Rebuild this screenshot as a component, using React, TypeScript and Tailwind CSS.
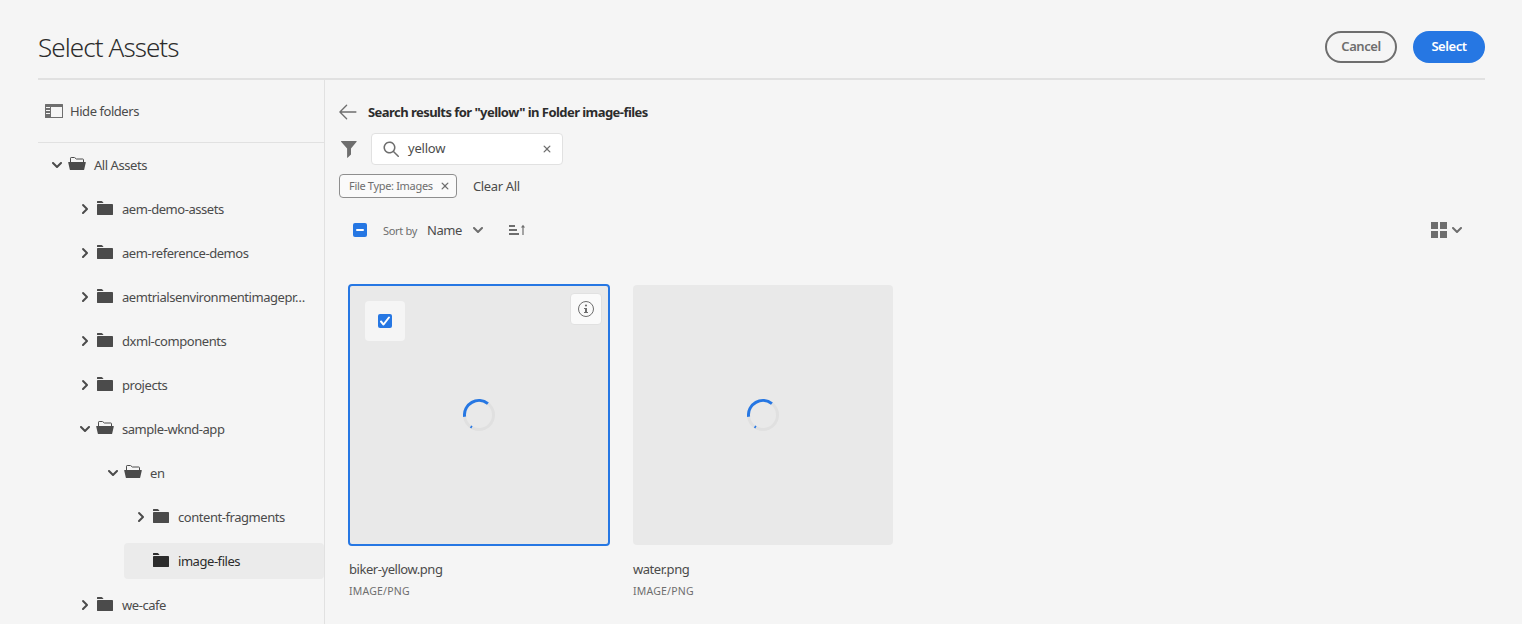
import React from 'react';

type IconProps = { className?: string };

const Chevron = ({ className = '' }: IconProps) => (
  <svg viewBox="0 0 10 6" className={`h-1.5 w-2.5 shrink-0 ${className}`} fill="currentColor">
    <path d="M9.99 1.01A1 1 0 0 0 8.283.303L5 3.586 1.717.303A1 1 0 1 0 .303 1.717l3.99 3.98a1 1 0 0 0 1.414 0l3.99-3.98a.997.997 0 0 0 .293-.707z" />
  </svg>
);

const Cross = () => (
  <svg viewBox="0 0 8 8" className="size-2 shrink-0 text-[#6e6e6e]" fill="currentColor">
    <path d="M7.317 6.433L4.884 4l2.433-2.433a.625.625 0 1 0-.884-.884L4 3.116 1.567.683a.625.625 0 1 0-.884.884L3.116 4 .683 6.433a.625.625 0 1 0 .884.884L4 4.884l2.433 2.433a.625.625 0 0 0 .884-.884z" />
  </svg>
);

const Folder = ({ open }: { open?: boolean }) => (
  <svg viewBox="0 0 18 18" className="size-[18px] shrink-0" fill="currentColor">
    {open ? (
      <>
        <path d="M2.5 6.5V2.2a.7.7 0 0 1 .7-.7h3.1a.8.8 0 0 1 .6.3l1.5 1.2h6.4a.7.7 0 0 1 .7.7v2.8" fill="none" stroke="currentColor" />
        <path d="M.6 6h16.8a.4.4 0 0 1 .4.5l-1.6 7a.6.6 0 0 1-.6.5H2.4a.6.6 0 0 1-.6-.5L.2 6.5A.4.4 0 0 1 .6 6z" />
      </>
    ) : (
      <>
        <path d="M1 3V1.5a.5.5 0 0 1 .5-.5h4.1a1 1 0 0 1 .8.4L7.6 3z" />
        <rect x="1" y="4" width="16" height="11" rx=".4" />
      </>
    )}
  </svg>
);

const Spinner = () => (
  <svg viewBox="0 0 32 32" className="size-8" fill="none" strokeWidth="3">
    <circle cx="16" cy="16" r="14.5" stroke="#e0e0e0" />
    <path d="M1.6 17.8A14.5 14.5 0 0 1 24.9 4.6" stroke="#2677e3" />
    <path d="M7.6 29l1.3-2.2" stroke="#2677e3" strokeWidth="1.6" />
  </svg>
);

type Node = { name: string; level: 0 | 1 | 2 | 3; state: 'open' | 'closed' | 'leaf' };

const nodes: Node[] = [
  { name: 'All Assets', level: 0, state: 'open' },
  { name: 'aem-demo-assets', level: 1, state: 'closed' },
  { name: 'aem-reference-demos', level: 1, state: 'closed' },
  { name: 'aemtrialsenvironmentimagepr…', level: 1, state: 'closed' },
  { name: 'dxml-components', level: 1, state: 'closed' },
  { name: 'projects', level: 1, state: 'closed' },
  { name: 'sample-wknd-app', level: 1, state: 'open' },
  { name: 'en', level: 2, state: 'open' },
  { name: 'content-fragments', level: 3, state: 'closed' },
  { name: 'image-files', level: 3, state: 'leaf' },
  { name: 'we-cafe', level: 1, state: 'closed' },
];

const indents = ['ml-0.5', 'ml-[30px]', 'ml-[58px]', 'ml-[86px]'];

const TreeRow = ({ node }: { node: Node }) => {
  const leaf = node.state === 'leaf';
  return (
    <li className={`flex h-9 items-center rounded ${indents[node.level]} ${leaf ? 'bg-[#ebebeb] text-[#2c2c2c]' : 'text-[#4b4b4b]'}`}>
      <span className="ml-3 mr-1.5 flex w-2.5 justify-center">
        {!leaf && <Chevron className={node.state === 'closed' ? '-rotate-90' : ''} />}
      </span>
      <Folder open={node.state === 'open'} />
      <span className="ml-2 whitespace-nowrap pt-0.5">{node.name}</span>
    </li>
  );
};

const Asset = ({ name, selected }: { name: string; selected?: boolean }) => (
  <article className="w-[262px]">
    <div className={`relative flex h-[262px] items-center justify-center rounded border-2 bg-clip-padding ${selected ? 'border-[#2677e3] bg-[#e9e9e9]' : 'border-transparent'}`}>
      {!selected && <div className="absolute -inset-px rounded bg-[#e9e9e9]" />}
      <div className="relative">
        <Spinner />
      </div>
      {selected && (
        <>
          <div className="absolute left-[15px] top-[15px] flex size-10 items-center justify-center rounded bg-[#f5f5f5]">
            <span className="flex size-3.5 items-center justify-center rounded-xs bg-[#2677e3]">
              <svg viewBox="0 0 10 10" className="size-2.5" fill="#fff">
                <path d="M3.5 9.5a.999.999 0 01-.774-.368l-2.45-3a1 1 0 111.548-1.264l1.657 2.028 4.68-6.01A1 1 0 019.74 2.114l-5.45 7a1 1 0 01-.777.386z" />
              </svg>
            </span>
          </div>
          <button className="absolute right-1.5 top-[7px] flex size-8 items-center justify-center rounded border border-[#e1e1e1] bg-[#fafafa]">
            <svg viewBox="0 0 18 18" className="size-[18px]" fill="#6e6e6e">
              <circle cx="9" cy="9" r="7.5" fill="none" stroke="#6e6e6e" />
              <circle cx="9" cy="5.5" r="1.1" />
              <path d="M7 8h3v4h1v1H7v-1h1V9H7z" />
            </svg>
          </button>
        </>
      )}
    </div>
    <h3 className="ml-px mt-[13px] h-5 leading-5 text-[#4b4b4b]">{name}</h3>
    <p className="ml-px mt-1 text-[10.5px] leading-4 tracking-[0.2px] text-[#6e6e6e]">IMAGE/PNG</p>
  </article>
);

export default function App() {
  return (
    <div className="flex h-[624px] flex-col overflow-hidden bg-[#f5f5f5] px-[38px] font-['Noto_Sans',sans-serif] text-[13px] tracking-[-0.45px] text-[#4b4b4b]">
      <header className="mr-[-1px] flex h-20 shrink-0 items-center justify-between border-b-2 border-[#e1e1e1] pt-4">
        <h1 className="text-[26px] font-light leading-8 tracking-[-0.92px] text-[#2c2c2c]">Select Assets</h1>
        <div className="flex gap-4 font-semibold">
          <button className="h-8 w-[72px] rounded-full border-2 border-[#6e6e6e] text-[#6e6e6e]">Cancel</button>
          <button className="h-8 w-[72px] rounded-full bg-[#2677e3] text-white">Select</button>
        </div>
      </header>
      <div className="flex min-h-0 flex-1">
        <nav className="w-[287px] shrink-0 border-r border-[#e1e1e1]">
          <button className="flex h-[63px] w-full items-center gap-[7px] border-b border-[#e1e1e1] pl-[7px]">
            <svg viewBox="0 0 18 14" className="h-3.5 w-[18px]" fill="#6e6e6e">
              <path fillRule="evenodd" d="M.5 0h17a.5.5 0 0 1 .5.5v13a.5.5 0 0 1-.5.5H.5a.5.5 0 0 1-.5-.5V.5A.5.5 0 0 1 .5 0zM6 3v10h11V3zM1 3v1h4V3zm0 3v1h4V6zm0 3v1h4V9z" />
            </svg>
            <span className="pt-0.5">Hide folders</span>
          </button>
          <ul className="mt-1 flex flex-col gap-2">
            {nodes.map((node) => (
              <TreeRow key={node.name} node={node} />
            ))}
          </ul>
        </nav>
        <main className="flex-1">
          <div className="mt-[22px] flex h-5 items-center pl-3.5 text-[#2c2c2c]">
            <svg viewBox="0 0 18 16" className="mr-[11px] h-4 w-[18px]" fill="none" stroke="#6e6e6e" strokeWidth="1.3" strokeLinecap="round" strokeLinejoin="round">
              <path d="M7.6 1.2L.9 8l6.7 6.8M.9 8h16" />
            </svg>
            <h2 className="pt-0.5 font-bold tracking-[-0.55px]">Search results for "yellow" in Folder image-files</h2>
          </div>
          <div className="mt-[11px] flex items-center pl-4">
            <svg viewBox="0 0 16 17" className="mr-3.5 h-[17px] w-4" fill="#6e6e6e">
              <path d="M.4 0h14.9a.4.4 0 0 1 .3.65L10 7.4v6.2L6.6 16.8a.3.3 0 0 1-.5-.2V7.4L.1.65A.4.4 0 0 1 .4 0z" />
            </svg>
            <div className="flex h-8 w-48 items-center rounded border border-[#e1e1e1] bg-white pl-[11px] pr-[11px]">
              <svg viewBox="0 0 16 16" className="mr-[9px] size-4" fill="#6e6e6e">
                <path d="M15.77 14.71l-4.534-4.535a6.014 6.014 0 10-1.06 1.06l4.533 4.535a.75.75 0 101.061-1.06zM6.5 11A4.5 4.5 0 1111 6.5 4.505 4.505 0 016.5 11z" />
              </svg>
              <span className="flex-1 tracking-[-0.2px]">yellow</span>
              <Cross />
            </div>
          </div>
          <div className="mt-[9px] flex items-center pl-3.5">
            <div className="flex h-6 w-[118px] items-center justify-between rounded border border-[#8e8e8e] bg-[#fafafa] pl-[9px] pr-[7px] text-[11px] tracking-[-0.32px] text-[#6e6e6e]">
              <span>File Type: Images</span>
              <Cross />
            </div>
            <button className="ml-4 pt-0.5 tracking-[-0.35px]">Clear All</button>
          </div>
          <div className="mt-[22px] flex h-5 items-center pl-7">
            <span className="flex size-3.5 items-center justify-center rounded-xs bg-[#2677e3]">
              <span className="h-0.5 w-2 rounded-full bg-white" />
            </span>
            <span className="ml-4 w-11 pt-0.5 text-[11px] tracking-[-0.3px] text-[#6e6e6e]">Sort by</span>
            <span className="w-[46px] pt-0.5">Name</span>
            <Chevron className="text-[#6e6e6e]" />
            <svg viewBox="0 0 18 12" className="ml-[26px] h-3 w-[18px]" fill="#6e6e6e">
              <path d="M0 1h6v2H0zM0 5h8v2H0zM0 9h10v2H0zM13.4 11V3.5H11.9L14 .7l2.1 2.8h-1.5V11z" />
            </svg>
            <svg viewBox="0 0 16 16" className="ml-auto size-4" fill="#6e6e6e">
              <path d="M0 0h7v7H0zM9 0h7v7H9zM0 9h7v7H0zM9 9h7v7H9z" />
            </svg>
            <Chevron className="ml-[5px] mr-[22px] text-[#6e6e6e]" />
          </div>
          <section className="mt-11 flex gap-[22px] pl-[23px]">
            <Asset name="biker-yellow.png" selected />
            <Asset name="water.png" />
          </section>
        </main>
      </div>
    </div>
  );
}
